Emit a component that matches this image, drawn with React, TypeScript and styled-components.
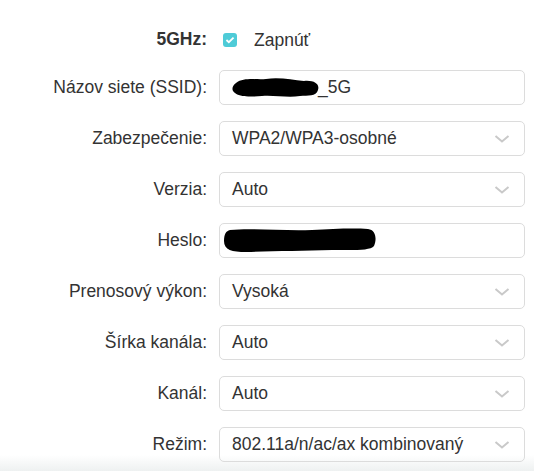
import React from 'react';
import styled, { createGlobalStyle } from 'styled-components';

const GlobalStyle = createGlobalStyle`
  html, body {
    margin: 0;
    background: #fff;
    height: 471px;
    overflow: hidden;
  }
  body {
    font-family: "Liberation Sans", Arial, sans-serif;
    font-size: 17.5px;
    color: #333;
  }
`;

const Page = styled.div`
  display: flex;
  flex-direction: column;
  padding-top: 25px;
`;

const Form = styled.div`
  display: grid;
  grid-template-columns: 207px 306px;
  column-gap: 12px;
  row-gap: 16px;
  align-items: center;
`;

const Label = styled.div<{ $bold?: boolean }>`
  text-align: right;
  font-weight: ${(p) => (p.$bold ? 700 : 400)};
  color: #333;
  white-space: nowrap;
`;

const ToggleRow = styled.label`
  display: flex;
  align-items: center;
  gap: 17px;
  height: 30px;
  padding-left: 4px;
  margin-bottom: -1px;
`;

const Check = styled.span`
  width: 14px;
  height: 14px;
  border-radius: 3px;
  background: #4ecbd7;
  display: flex;
  align-items: center;
  justify-content: center;
`;

const Field = styled.div`
  position: relative;
  box-sizing: border-box;
  height: 35px;
  border: 1px solid #dcdcdc;
  border-radius: 5px;
  display: flex;
  align-items: center;
  padding: 0 12px;
  color: #333;
`;

const Chevron = styled.span`
  margin-left: auto;
  display: flex;
  align-items: center;
  margin-right: 2px;
`;

const Scribble = styled.svg`
  position: absolute;
  pointer-events: none;
`;

const Shade = styled.div`
  height: 16px;
  margin-top: -7px;
  background: linear-gradient(#ffffff, #eef1f1);
`;

const ChevronIcon = () => (
  <Chevron>
    <svg width="16" height="10" viewBox="0 0 16 10">
      <path d="M1.5 2 L8 7.5 L14.5 2" fill="none" stroke="#c9c9c9" strokeWidth="2" />
    </svg>
  </Chevron>
);

const Select = ({ value }: { value: string }) => (
  <Field>
    {value}
    <ChevronIcon />
  </Field>
);

export default function App() {
  return (
    <Page>
      <GlobalStyle />
      <Form>
        <Label $bold>5GHz:</Label>
        <ToggleRow>
          <Check>
            <svg width="10" height="8" viewBox="0 0 11 9">
              <path d="M1.5 4.5 L4.2 7 L9.5 1.8" fill="none" stroke="#fff" strokeWidth="2" />
            </svg>
          </Check>
          Zapnúť
        </ToggleRow>

        <Label>Názov siete (SSID):</Label>
        <Field>
          <Scribble width="92" height="26" viewBox="0 0 92 26" style={{ left: 10, top: 4 }}>
            <path
              d="M6 8 C14 2 26 5 36 4 C50 2 62 5 74 6 C84 5 90 9 88 15 C86 22 78 20 70 21 C58 23 44 20 32 21 C20 22 10 22 5 18 C1 15 2 11 6 8 Z"
              fill="#000"
            />
          </Scribble>
          <span style={{ marginLeft: 86 }}>_5G</span>
        </Field>

        <Label>Zabezpečenie:</Label>
        <Select value="WPA2/WPA3-osobné" />

        <Label>Verzia:</Label>
        <Select value="Auto" />

        <Label>Heslo:</Label>
        <Field>
          <Scribble width="156" height="30" viewBox="0 0 156 30" style={{ left: 2, top: 1 }}>
            <path
              d="M8 5 C30 3 60 6 90 5 C110 4 130 3 146 4 C154 5 155 14 152 21 C148 26 130 25 110 25 C80 26 50 26 24 27 C10 27 2 25 2 16 C2 9 4 6 8 5 Z"
              fill="#000"
            />
          </Scribble>
        </Field>

        <Label>Prenosový výkon:</Label>
        <Select value="Vysoká" />

        <Label>Šírka kanála:</Label>
        <Select value="Auto" />

        <Label>Kanál:</Label>
        <Select value="Auto" />

        <Label>Režim:</Label>
        <Select value="802.11a/n/ac/ax kombinovaný" />
      </Form>
      <Shade />
    </Page>
  );
}
